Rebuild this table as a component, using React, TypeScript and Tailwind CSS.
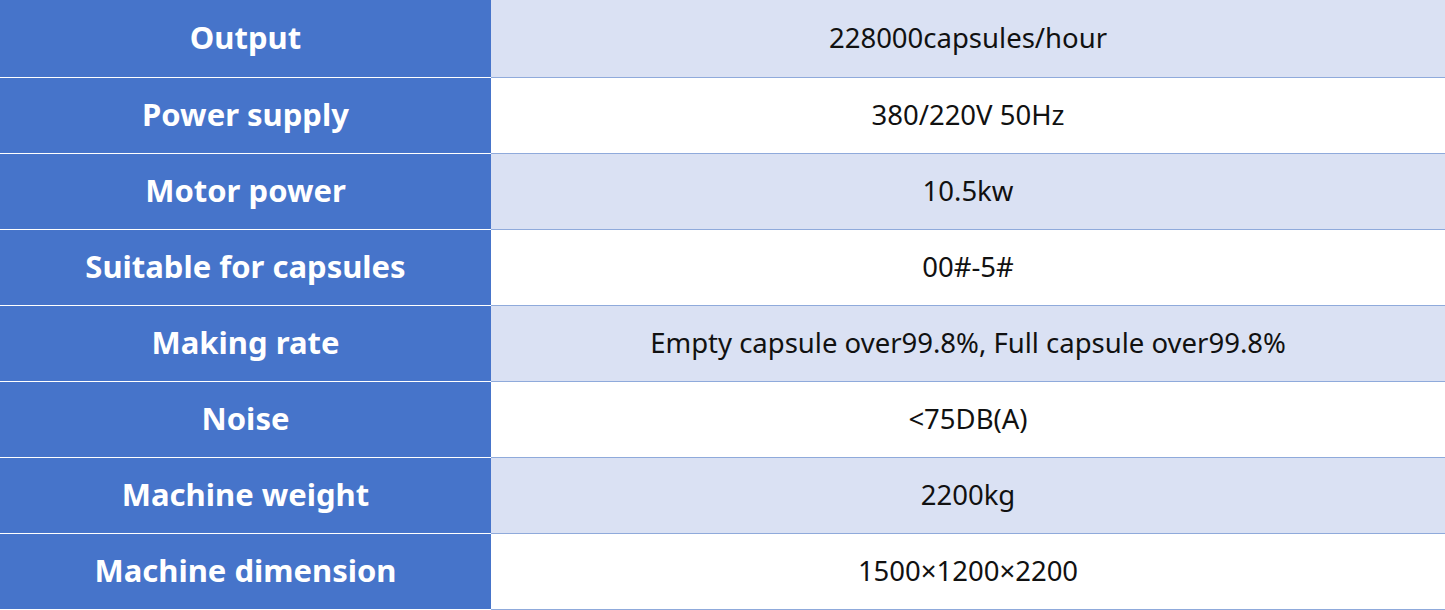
const rows = [
  ["Output", "228000capsules/hour"],
  ["Power supply", "380/220V 50Hz"],
  ["Motor power", "10.5kw"],
  ["Suitable for capsules", "00#-5#"],
  ["Making rate", "Empty capsule over99.8%, Full capsule over99.8%"],
  ["Noise", "<75DB(A)"],
  ["Machine weight", "2200kg"],
  ["Machine dimension", "1500×1200×2200"],
];

export default function App() {
  return (
    <div className="w-[1445px] h-[610px] bg-white font-['Noto_Sans',sans-serif] overflow-hidden">
      {rows.map(([label, value], i) => (
        <div key={label} className={`flex ${i === 0 ? "h-[78px]" : "h-[76px]"}`}>
          <div className="w-[491px] flex items-center justify-center pb-[2px] bg-[#4674CA] border-b border-white text-white font-bold text-[31px]">
            {label}
          </div>
          <div
            className={`flex-1 flex items-center justify-center pb-[2px] border-b border-[#8FAADB] text-[#111] text-[27.5px] ${
              i % 2 === 0 ? "bg-[#DAE1F3]" : "bg-white"
            }`}
          >
            {value}
          </div>
        </div>
      ))}
    </div>
  );
}
